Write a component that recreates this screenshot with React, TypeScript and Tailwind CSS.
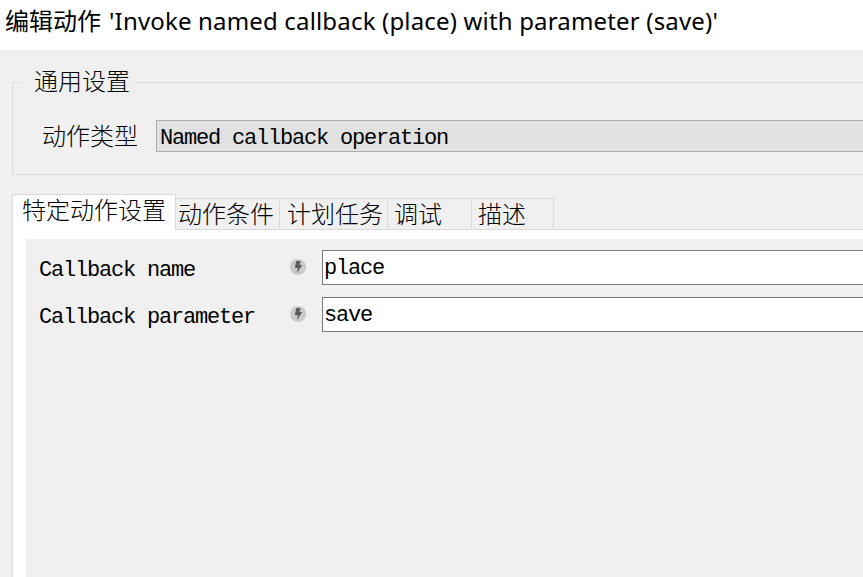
const cjk = "font-['Liberation_Mono','Noto_Sans_CJK_SC',monospace]";

function Bolt() {
  return (
    <svg viewBox="0 0 16 16" className="h-4 w-4 shrink-0">
      <circle cx="8" cy="8" r="8" fill="#cacac8" />
      <path d="M6.2 2.1H10.6L9.6 5.9H12.3L6.9 13.9L7.7 8.9H4.9Z" fill="#5c5c5c" />
    </svg>
  );
}

function Mono({ children }: { children: string }) {
  return <span className="block whitespace-pre text-[22px] leading-[30px] tracking-[-1.2px]">{children}</span>;
}

function Han({ children }: { children: string }) {
  return (
    <span className="block whitespace-nowrap font-['Noto_Sans_CJK_SC',sans-serif] text-[24px] font-light leading-[28px]">
      {children}
    </span>
  );
}

function Field({ label, value }: { label: string; value: string }) {
  return (
    <div className="flex h-[35px]">
      <div className="w-[251px] pt-[6px]">
        <Mono>{label}</Mono>
      </div>
      <div className="w-8 pt-[9px]">
        <Bolt />
      </div>
      <div className="flex-1 border border-r-0 border-[#7a7a7a] bg-white pl-px pt-[3px]">
        <Mono>{value}</Mono>
      </div>
    </div>
  );
}

export default function App() {
  return (
    <div className={`flex h-[577px] w-[863px] flex-col overflow-hidden bg-[#f0f0f0] text-black ${cjk}`}>
      <header className="flex h-[50px] shrink-0 whitespace-pre bg-white pl-[5px] font-['Noto_Sans','Noto_Sans_CJK_SC',sans-serif] text-[24px] leading-[42px]">
        <span className="w-[104px]">编辑动作</span>
        <span className="tracking-[0.17px]">'Invoke named callback (place) with parameter (save)'</span>
      </header>

      <section className="ml-3 mt-[17px] shrink-0">
        <div className="flex h-[30px] items-center">
          <div className="h-px w-[7px] bg-[#dcdcdc]" />
          <div className="w-[115px] pb-[5px] pl-[15px]">
            <Han>通用设置</Han>
          </div>
          <div className="h-px flex-1 bg-[#dcdcdc]" />
        </div>
        <div className="-mt-[15px] flex h-[93px] border-b border-l border-[#dcdcdc] pl-[29px] pt-[38px]">
          <div className="w-[114px] pt-px">
            <Han>动作类型</Han>
          </div>
          <div className="h-8 flex-1 border border-r-0 border-[#adadad] bg-[#e1e1e1] pl-[3px] pt-[3px]">
            <Mono>Named callback operation</Mono>
          </div>
        </div>
      </section>

      <nav className="relative z-10 ml-3 mt-[19px] flex h-9 shrink-0 items-end">
        <div className="h-9 w-[164px] border border-b-0 border-[#d9d9d9] bg-white pl-[9px]">
          <Han>特定动作设置</Han>
        </div>
        <div className="h-8 w-[104px] border-b border-r border-t border-[#d9d9d9] pl-[2px]">
          <Han>动作条件</Han>
        </div>
        <div className="h-8 w-[108px] border-b border-r border-t border-[#d9d9d9] pl-[7px]">
          <Han>计划任务</Han>
        </div>
        <div className="h-8 w-[84px] border-b border-r border-t border-[#d9d9d9] pl-[6px]">
          <Han>调试</Han>
        </div>
        <div className="h-8 w-[82px] border-b border-r border-t border-[#d9d9d9] pl-[6px]">
          <Han>描述</Han>
        </div>
        <div className="h-px flex-1 bg-[#d9d9d9]" />
      </nav>

      <main className="ml-3 flex flex-1 flex-col border-l border-[#d9d9d9] bg-white pl-[13px] pt-[9px]">
        <div className="flex flex-1 flex-col gap-3 bg-[#f0f0f0] pl-[13px] pt-[11px]">
          <Field label="Callback name" value="place" />
          <Field label="Callback parameter" value="save" />
        </div>
      </main>
    </div>
  );
}
